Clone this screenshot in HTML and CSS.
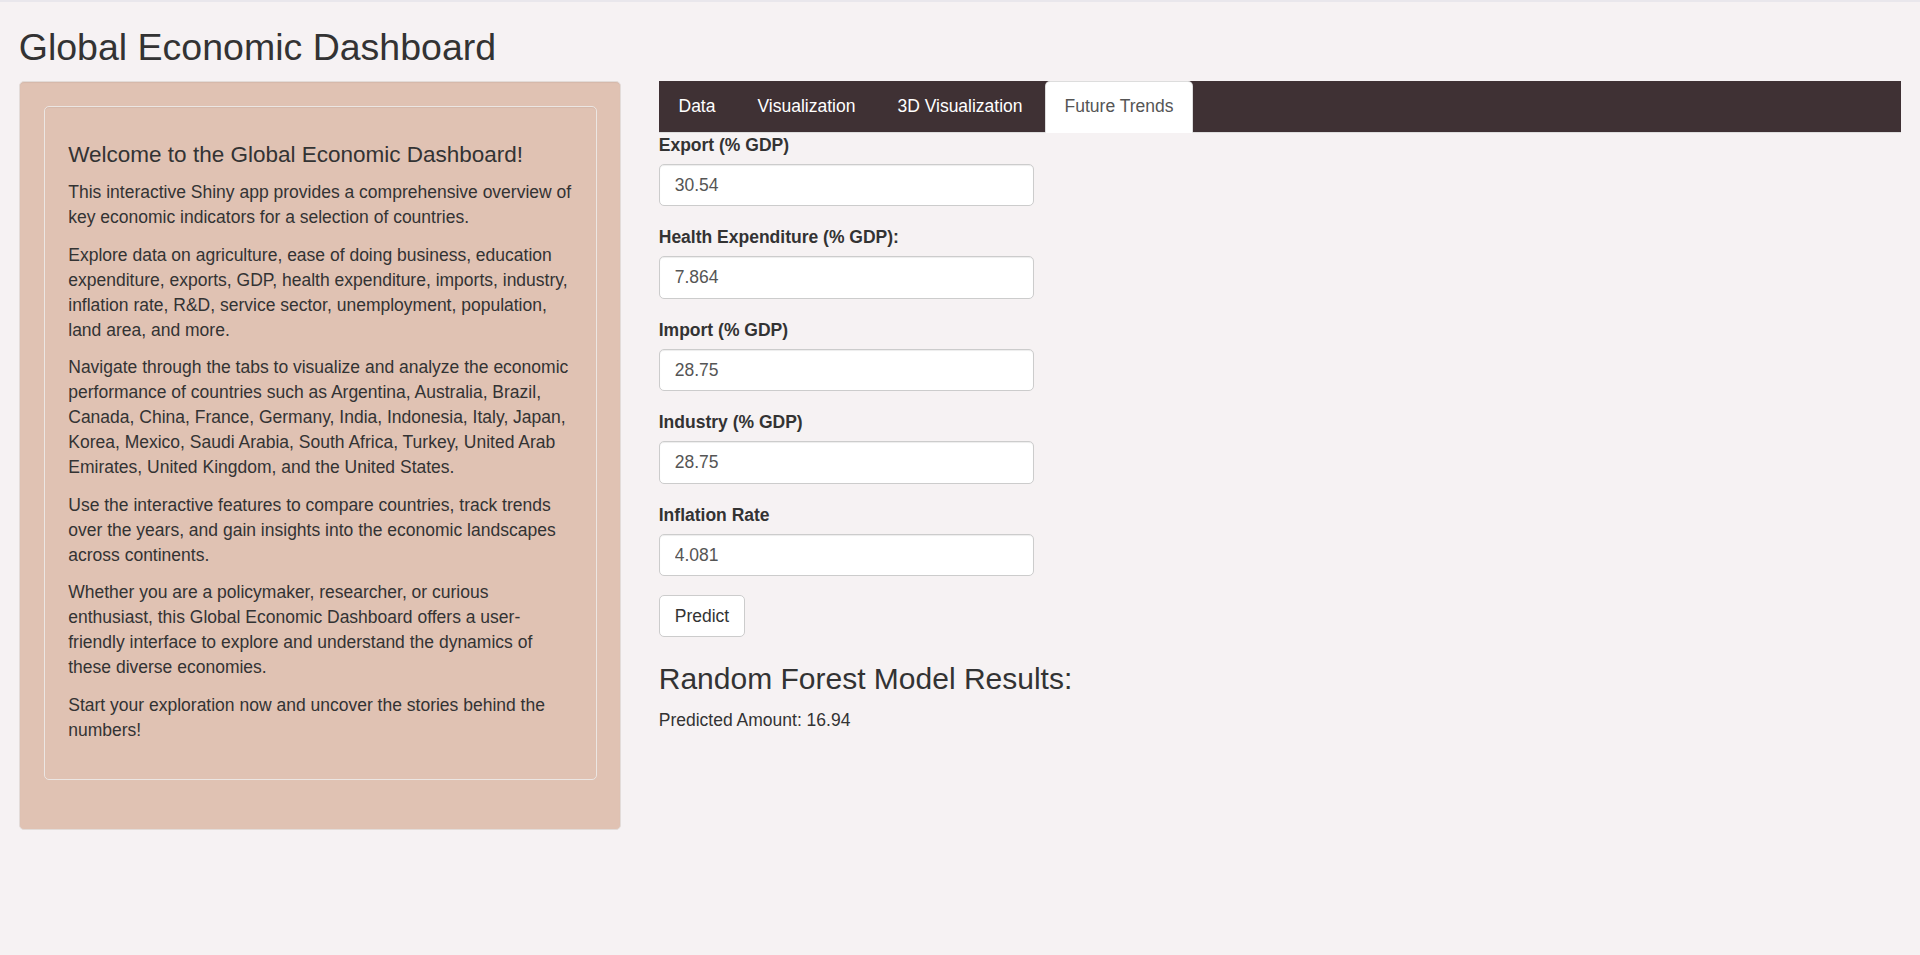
FILE: index.html
```html
<!DOCTYPE html>
<html lang="en">
<head>
<meta charset="utf-8">
<title>Global Economic Dashboard</title>
<link rel="stylesheet" href="styles.css">
</head>
<body>
<div class="topbar"></div>
<div class="page">
  <h2 class="title">Global Economic Dashboard</h2>
  <div class="layout">
    <aside class="sidebar">
      <div class="well">
        <div class="well inner">
          <h4 class="welcome">Welcome to the Global Economic Dashboard!</h4>
          <p>This interactive Shiny app provides a comprehensive overview of key economic indicators for a selection of countries.</p>
          <p>Explore data on agriculture, ease of doing business, education expenditure, exports, GDP, health expenditure, imports, industry, inflation rate, R&amp;D, service sector, unemployment, population, land area, and more.</p>
          <p>Navigate through the tabs to visualize and analyze the economic performance of countries such as Argentina, Australia, Brazil, Canada, China, France, Germany, India, Indonesia, Italy, Japan, Korea, Mexico, Saudi Arabia, South Africa, Turkey, United Arab Emirates, United Kingdom, and the United States.</p>
          <p>Use the interactive features to compare countries, track trends over the years, and gain insights into the economic landscapes across continents.</p>
          <p>Whether you are a policymaker, researcher, or curious enthusiast, this Global Economic Dashboard offers a user-friendly interface to explore and understand the dynamics of these diverse economies.</p>
          <p>Start your exploration now and uncover the stories behind the numbers!</p>
        </div>
      </div>
    </aside>
    <main class="main">
      <ul class="tabs">
        <li class="tab"><a href="#">Data</a></li>
        <li class="tab"><a href="#">Visualization</a></li>
        <li class="tab"><a href="#">3D Visualization</a></li>
        <li class="tab active"><a href="#">Future Trends</a></li>
      </ul>
      <div class="tab-content">
        <div class="form-group">
          <label class="control-label" for="export">Export (% GDP)</label>
          <input class="form-control" id="export" type="number" value="30.54">
        </div>
        <div class="form-group">
          <label class="control-label" for="health">Health Expenditure (% GDP):</label>
          <input class="form-control" id="health" type="number" value="7.864">
        </div>
        <div class="form-group">
          <label class="control-label" for="import">Import (% GDP)</label>
          <input class="form-control" id="import" type="number" value="28.75">
        </div>
        <div class="form-group">
          <label class="control-label" for="industry">Industry (% GDP)</label>
          <input class="form-control" id="industry" type="number" value="28.75">
        </div>
        <div class="form-group">
          <label class="control-label" for="inflation">Inflation Rate</label>
          <input class="form-control" id="inflation" type="number" value="4.081">
        </div>
        <div class="btn-row">
          <button class="btn" type="button">Predict</button>
        </div>
        <h3 class="results-title">Random Forest Model Results:</h3>
        <div class="result">Predicted Amount: 16.94</div>
      </div>
    </main>
  </div>
</div>
</body>
</html>
```

FILE: styles.css
```css
html, body {
  margin: 0;
  padding: 0;
}

body {
  background: #f6f2f3;
  color: #333333;
  font-family: "Liberation Sans", Arial, Helvetica, sans-serif;
  font-size: 17.5px;
  line-height: 25px;
}

.topbar {
  height: 2px;
  background: #e9e7ec;
}

.page {
  padding: 0 18.75px;
}

.title {
  font-size: 37.5px;
  font-weight: 400;
  line-height: 1.1;
  margin: 25px 0 12.5px 0;
  color: #333333;
}

.layout {
  display: grid;
  grid-template-columns: 602.5px 1fr;
  column-gap: 37.5px;
  align-items: start;
}

.well {
  background: #e0c2b3;
  border: 1.25px solid #e3dcd9;
  border-radius: 5px;
  padding: 23.75px;
  margin-bottom: 25px;
  box-shadow: inset 0 1px 1px rgba(0, 0, 0, 0.05);
}

.well.inner {
  border-color: #ece6e3;
}

.welcome {
  font-size: 22.5px;
  font-weight: 400;
  line-height: 1.1;
  margin: 12.5px 0 12.5px 0;
}

.well p {
  margin: 0 0 12.5px 0;
}

.tabs {
  display: flex;
  list-style: none;
  margin: 0;
  padding: 0;
  background: #3f3134;
  border-bottom: 1.25px solid #dddddd;
}

.tab {
  margin-bottom: -1.25px;
}

.tab a {
  display: block;
  padding: 12.5px 18.75px;
  margin-right: 2.5px;
  line-height: 25px;
  border: 1.25px solid transparent;
  border-radius: 5px 5px 0 0;
  color: #ffffff;
  text-decoration: none;
}

.tab.active a {
  color: #555555;
  background: #ffffff;
  border-color: #dddddd #dddddd transparent #dddddd;
}

.form-group {
  margin-bottom: 18.75px;
}

.control-label {
  display: inline-block;
  font-weight: 700;
  margin-bottom: 6.25px;
}

.form-control {
  display: block;
  box-sizing: border-box;
  width: 375px;
  height: 42.5px;
  padding: 7.5px 15px;
  font-family: inherit;
  font-size: 17.5px;
  line-height: 25px;
  color: #555555;
  background: #ffffff;
  border: 1.25px solid #cccccc;
  border-radius: 5px;
  box-shadow: inset 0 1px 1px rgba(0, 0, 0, 0.075);
  -moz-appearance: textfield;
  appearance: textfield;
}

.form-control::-webkit-outer-spin-button,
.form-control::-webkit-inner-spin-button {
  -webkit-appearance: none;
  margin: 0;
}

.btn-row {
  display: flex;
}

.btn {
  padding: 7.5px 15px;
  font-family: inherit;
  font-size: 17.5px;
  line-height: 25px;
  color: #333333;
  background: #ffffff;
  border: 1.25px solid #cccccc;
  border-radius: 5px;
  cursor: pointer;
}

.results-title {
  font-size: 30px;
  font-weight: 400;
  line-height: 1.1;
  margin: 25px 0 12.5px 0;
}
```
